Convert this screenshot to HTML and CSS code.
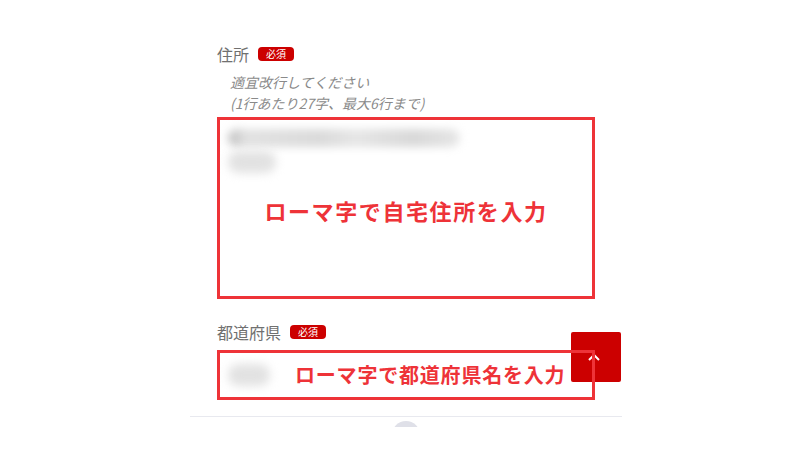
FILE: index.html
```html
<!DOCTYPE html>
<html lang="ja">
<head>
<meta charset="utf-8">
<title>住所入力</title>
<link rel="stylesheet" href="styles.css">
</head>
<body>
<main class="page">
  <div class="form">
    <div class="label-row">
      <span class="label">住所</span>
      <span class="badge">必須</span>
    </div>
    <p class="hint">適宜改行してください<br>(1行あたり27字、最大6行まで)</p>
    <div class="field field-address">
      <div class="blur-line"></div>
      <div class="blur-blob"></div>
      <div class="note note-large">ローマ字で自宅住所を入力</div>
    </div>

    <div class="label-row label-row-second">
      <span class="label">都道府県</span>
      <span class="badge">必須</span>
    </div>
    <div class="field field-pref">
      <div class="blur-blob blur-blob-pref"></div>
      <div class="note note-small">ローマ字で都道府県名を入力</div>
    </div>
  </div>
  <div class="divider"></div>
  <div class="dot-clip"><div class="dot"></div></div>
</main>
<button class="to-top" aria-label="ページトップへ">
  <svg width="14" height="10" viewBox="0 0 14 10"><path d="M2 8 L7 3 L12 8" fill="none" stroke="#fff" stroke-width="2"/></svg>
</button>
</body>
</html>
```

FILE: styles.css
```css
* { box-sizing: border-box; }
html, body {
  margin: 0;
  background: #fff;
}
body {
  font-family: "Noto Sans CJK JP", "Noto Sans", sans-serif;
  color: #666;
}
.page {
  width: 432px;
  margin: 0 auto;
  padding-top: 44px;
}
.form {
  padding: 0 27px;
}
.label-row {
  display: flex;
  align-items: center;
  height: 20px;
}
.label-row-second {
  margin-top: 23px;
}
.label {
  font-size: 16px;
  line-height: 20px;
  color: #707070;
}
.badge {
  margin-left: 9px;
  background: #cc0000;
  color: #fff;
  font-size: 10px;
  line-height: 14px;
  height: 14px;
  padding: 0 8px;
  border-radius: 4px;
}
.hint {
  margin: 8px 0 0;
  padding-left: 13px;
  font-size: 14px;
  line-height: 21px;
  font-style: italic;
  color: #8a8a8a;
}
.field {
  position: relative;
  z-index: 2;
  border: 3px solid #ee3338;
  margin-top: 3px;
}
.field-address {
  height: 182px;
  padding: 9px 8px 0;
  display: flex;
  flex-direction: column;
}
.blur-line {
  width: 232px;
  height: 18px;
  border-radius: 9px;
  background: linear-gradient(90deg, #bdbdbd 0%, #e2e2e2 8%, #dadada 40%, #e6e6e6 55%, #d8d8d8 80%, #e6e6e6 100%);
  filter: blur(4px);
}
.blur-blob {
  width: 48px;
  height: 22px;
  margin-top: 4px;
  border-radius: 11px;
  background: #e2e2e2;
  filter: blur(5px);
}
.note {
  color: #ee3338;
  font-weight: 700;
  white-space: nowrap;
}
.note-large {
  margin-top: 25px;
  align-self: center;
  font-size: 22px;
  line-height: 24px;
  letter-spacing: 1.6px;
}
.field-pref {
  margin-top: 8px;
  height: 50px;
  padding-left: 8px;
  display: flex;
  align-items: center;
}
.blur-blob-pref {
  margin-top: 0;
  width: 42px;
  height: 22px;
}
.note-small {
  margin-left: 25px;
  font-size: 20px;
  line-height: 24px;
  letter-spacing: 0.8px;
}
.divider {
  margin-top: 16px;
  height: 1px;
  background: #e8e9ef;
}
.dot-clip {
  margin: 4px auto 0;
  width: 28px;
  height: 6px;
  overflow: hidden;
}
.dot {
  width: 28px;
  height: 28px;
  border-radius: 50%;
  background: #dfe0e8;
}
.to-top {
  position: absolute;
  left: 571px;
  top: 332px;
  width: 50px;
  height: 50px;
  border: 0;
  border-radius: 2px;
  background: #cc0000;
  display: flex;
  align-items: center;
  justify-content: center;
  padding: 0 4px 0 0;
  z-index: 1;
}
```
